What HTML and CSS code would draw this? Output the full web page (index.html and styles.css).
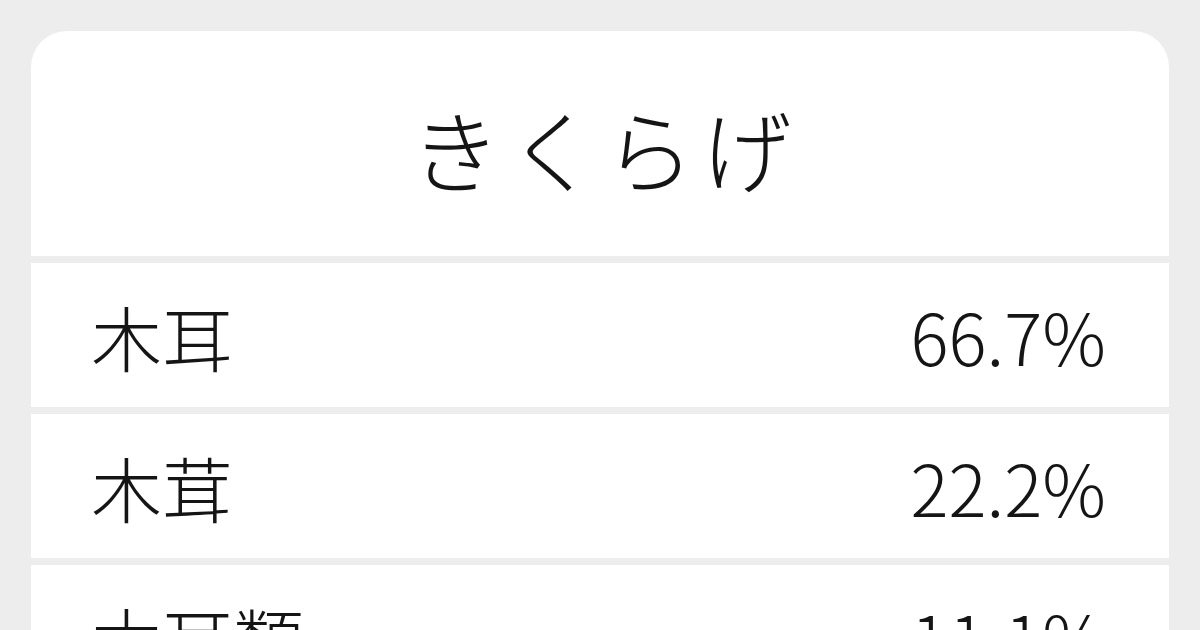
FILE: index.html
```html
<!DOCTYPE html>
<html lang="ja">
<head>
<meta charset="utf-8">
<link rel="stylesheet" href="styles.css">
</head>
<body>
<div class="card">
  <div class="title">きくらげ</div>
  <div class="row"><span class="word">木耳</span><span class="pct">66.7%</span></div>
  <div class="row"><span class="word">木茸</span><span class="pct">22.2%</span></div>
  <div class="row"><span class="word">木耳類</span><span class="pct">11.1%</span></div>
</div>
</body>
</html>
```
FILE: styles.css
```css
html, body {
  margin: 0;
  padding: 0;
  background: #ededed;
  width: 1200px;
  height: 630px;
  overflow: hidden;
}
body {
  font-family: "Noto Sans CJK JP", "Noto Sans", sans-serif;
  font-weight: 300;
  color: #151515;
}
.card {
  margin: 31px 31px 0 31px;
  border-radius: 36px 36px 0 0;
  overflow: hidden;
  display: flex;
  flex-direction: column;
  gap: 7px;
}
.title {
  height: 225px;
  background: #fff;
  display: flex;
  align-items: center;
  justify-content: center;
  font-size: 90px;
  letter-spacing: 7px;
  line-height: 1;
  padding: 6px 0 0 9px;
  box-sizing: border-box;
}
.row {
  height: 144px;
  flex: none;
  background: #fff;
  display: flex;
  align-items: center;
  justify-content: space-between;
  padding: 0 63px 0 60px;
  font-size: 71px;
  line-height: 1;
}
```
